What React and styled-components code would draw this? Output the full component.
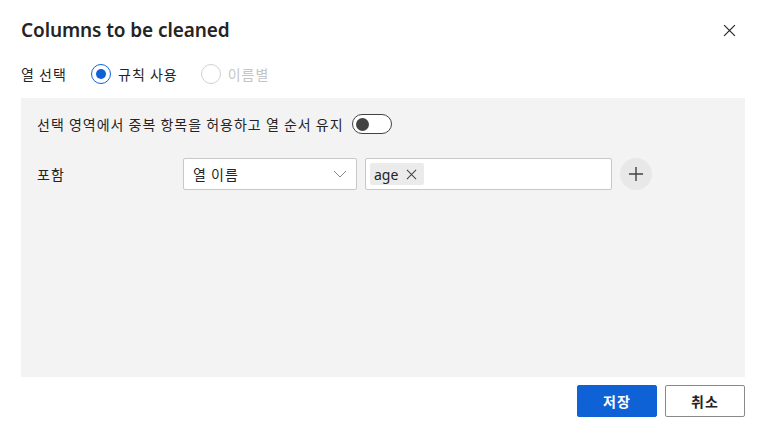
import React from "react";
import styled, { createGlobalStyle } from "styled-components";

const GlobalStyle = createGlobalStyle`
  html, body {
    margin: 0;
    padding: 0;
    background: #ffffff;
  }
  body {
    font-family: "Noto Sans", "Noto Sans CJK KR", sans-serif;
    font-size: 14px;
    color: #242424;
  }
`;

const korean = `
  font-family: "Noto Sans CJK KR", sans-serif;
  letter-spacing: 1px;
`;

const Dialog = styled.div`
  width: 769px;
  height: 441px;
  box-sizing: border-box;
  padding: 16px 24px 0 21px;
  display: flex;
  flex-direction: column;
`;

const Header = styled.div`
  display: flex;
  align-items: center;
  justify-content: space-between;
  height: 28px;
`;

const Title = styled.h2`
  margin: 0;
  font-size: 19px;
  font-weight: 600;
  color: #242424;
  letter-spacing: -0.1px;
`;

const CloseButton = styled.button`
  width: 24px;
  height: 24px;
  margin-right: 4px;
  padding: 0;
  border: none;
  background: transparent;
  display: flex;
  align-items: center;
  justify-content: center;
  cursor: pointer;
`;

const ModeRow = styled.div`
  display: flex;
  align-items: center;
  height: 22px;
  margin-top: 19px;
`;

const ModeLabel = styled.span`
  width: 70px;
  ${korean}
`;

const RadioOption = styled.label`
  display: flex;
  align-items: center;
  gap: 7px;
  margin-right: 23px;
  ${korean}
  color: ${(p) => (p.disabled ? "#c4c4c4" : "#242424")};
`;

const RadioCircle = styled.span`
  flex: none;
  width: 20px;
  height: 20px;
  box-sizing: border-box;
  border-radius: 50%;
  border: 1px solid ${(p) => (p.checked ? "#0f62d6" : "#d1d1d1")};
  display: flex;
  align-items: center;
  justify-content: center;

  &::after {
    content: "";
    width: 10px;
    height: 10px;
    border-radius: 50%;
    background: ${(p) => (p.checked ? "#0f62d6" : "transparent")};
  }
`;

const Panel = styled.div`
  margin-top: 13px;
  height: 279px;
  background: #f3f3f3;
  box-sizing: border-box;
  padding: 16px 16px;
  display: flex;
  flex-direction: column;
`;

const ToggleRow = styled.div`
  display: flex;
  align-items: center;
  gap: 8px;
  height: 20px;
  ${korean}
`;

const Toggle = styled.span`
  flex: none;
  width: 40px;
  height: 20px;
  box-sizing: border-box;
  border: 1px solid #424242;
  border-radius: 10px;
  background: #ffffff;
  display: flex;
  align-items: center;
  padding-left: 3px;

  &::after {
    content: "";
    width: 13px;
    height: 13px;
    border-radius: 50%;
    background: #424242;
  }
`;

const FieldRow = styled.div`
  display: flex;
  align-items: center;
  margin-top: 24px;
  gap: 8px;
`;

const FieldLabel = styled.span`
  width: 138px;
  ${korean}
`;

const Select = styled.div`
  width: 174px;
  height: 32px;
  box-sizing: border-box;
  background: #ffffff;
  border: 1px solid #c8c8c8;
  border-radius: 2px;
  display: flex;
  align-items: center;
  justify-content: space-between;
  padding: 0 9px 0 9px;
  ${korean}
`;

const TagInput = styled.div`
  width: 247px;
  height: 32px;
  box-sizing: border-box;
  background: #ffffff;
  border: 1px solid #c8c8c8;
  border-radius: 2px;
  display: flex;
  align-items: center;
  padding: 0 4px;
`;

const Tag = styled.span`
  height: 22px;
  display: flex;
  align-items: center;
  gap: 8px;
  padding: 0 7px 0 4px;
  background: #ebebeb;
  border-radius: 2px;
  font-size: 14px;
  color: #242424;
`;

const AddButton = styled.button`
  width: 32px;
  height: 32px;
  border-radius: 50%;
  border: none;
  background: #e8e8e8;
  padding: 0;
  display: flex;
  align-items: center;
  justify-content: center;
`;

const Footer = styled.div`
  display: flex;
  justify-content: flex-end;
  gap: 8px;
  margin-top: 8px;
`;

const Button = styled.button`
  width: 80px;
  height: 32px;
  box-sizing: border-box;
  border-radius: 2px;
  ${korean}
  font-size: 14px;
  font-weight: 600;
  cursor: pointer;
  background: ${(p) => (p.primary ? "#0f62d6" : "#ffffff")};
  color: ${(p) => (p.primary ? "#ffffff" : "#242424")};
  border: 1px solid ${(p) => (p.primary ? "#0f62d6" : "#8a8a8a")};
`;

const Cross = ({ size = 12, color = "#242424" }) => (
  <svg width={size} height={size} viewBox="0 0 12 12">
    <path d="M1 1L11 11M11 1L1 11" stroke={color} strokeWidth="1.1" fill="none" />
  </svg>
);

export default function App() {
  return (
    <>
      <GlobalStyle />
      <Dialog>
        <Header>
          <Title>Columns to be cleaned</Title>
          <CloseButton aria-label="닫기">
            <Cross size={13} />
          </CloseButton>
        </Header>

        <ModeRow>
          <ModeLabel>열 선택</ModeLabel>
          <RadioOption>
            <RadioCircle checked />
            규칙 사용
          </RadioOption>
          <RadioOption disabled>
            <RadioCircle />
            이름별
          </RadioOption>
        </ModeRow>

        <Panel>
          <ToggleRow>
            선택 영역에서 중복 항목을 허용하고 열 순서 유지
            <Toggle />
          </ToggleRow>

          <FieldRow>
            <FieldLabel>포함</FieldLabel>
            <Select>
              열 이름
              <svg width="14" height="8" viewBox="0 0 14 8">
                <path d="M1 1L7 7L13 1" stroke="#8a8a8a" strokeWidth="1" fill="none" />
              </svg>
            </Select>
            <TagInput>
              <Tag>
                age
                <Cross size={11} color="#424242" />
              </Tag>
            </TagInput>
            <AddButton aria-label="추가">
              <svg width="16" height="16" viewBox="0 0 16 16">
                <path d="M8 1V15M1 8H15" stroke="#424242" strokeWidth="1.4" fill="none" />
              </svg>
            </AddButton>
          </FieldRow>
        </Panel>

        <Footer>
          <Button primary>저장</Button>
          <Button>취소</Button>
        </Footer>
      </Dialog>
    </>
  );
}
